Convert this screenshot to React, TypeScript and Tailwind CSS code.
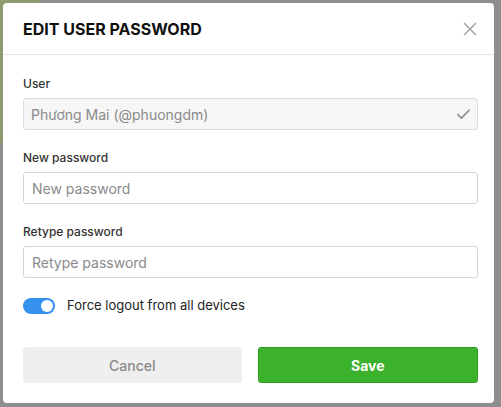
import { Check } from 'lucide-react'

export default function App() {
  return (
    <div
      className="w-[501px] h-[407px] p-[3px] pr-[7px] pb-[4px] bg-[#8e8e8e] bg-no-repeat bg-[length:40px_100%] bg-[linear-gradient(to_bottom,#8d9b6e_143px,#8e8e8e_143px)]"
      style={{ fontFamily: 'Inter, "Noto Sans", sans-serif' }}
    >
      <div className="h-full bg-white rounded-[4px] flex flex-col">
        {/* Header */}
        <div className="h-[52px] shrink-0 flex items-center justify-between pl-5 pr-4 border-b border-[#e3e3e3]">
          <h2 className="text-[16px] font-bold text-[#111]">EDIT USER PASSWORD</h2>
          <button className="w-4 h-4 flex items-center justify-center text-[#a3a3a3]">
            <svg width="14" height="14" viewBox="0 0 14 14" fill="none" stroke="currentColor" strokeWidth="1.5">
              <path d="M1 1L13 13M13 1L1 13" />
            </svg>
          </button>
        </div>

        {/* Body */}
        <div className="pl-5 pr-4 pt-[19px] pb-5 flex flex-col">
          <label className="text-[12px] leading-5 font-medium text-[#333] mb-1">User</label>
          <div className="h-8 flex items-center justify-between pl-[7px] pr-[5px] border border-[#dcdcdc] rounded-[3px] bg-[#f6f6f6]">
            <span className="text-[14px] text-[#8a8a8a]">Phương Mai (@phuongdm)</span>
            <Check size={17} strokeWidth={2.4} className="text-[#8f8f8f]" />
          </div>

          <label className="text-[12px] leading-5 font-medium text-[#333] mt-[18px] mb-1">New password</label>
          <input
            type="password"
            placeholder="New password"
            className="h-8 pl-2 border border-[#d6d6d6] rounded-[3px] text-[14px] text-[#333] placeholder:text-[#8a8a8a] outline-none"
          />

          <label className="text-[12px] leading-5 font-medium text-[#333] mt-[18px] mb-1">Retype password</label>
          <input
            type="password"
            placeholder="Retype password"
            className="h-8 pl-2 border border-[#d6d6d6] rounded-[3px] text-[14px] text-[#333] placeholder:text-[#8a8a8a] outline-none"
          />

          <div className="mt-[18px] h-5 flex items-center gap-3">
            <span className="relative w-8 h-4 rounded-full bg-[#3590ee] shrink-0">
              <span className="absolute right-[2px] top-[2px] w-3 h-3 rounded-full bg-white" />
            </span>
            <span className="text-[13px] text-[#222]">Force logout from all devices</span>
          </div>

          <div className="mt-[31px] flex gap-4">
            <button className="flex-1 h-9 rounded-[3px] bg-[#efefef] text-[14px] text-[#8a8a8a] font-medium">
              Cancel
            </button>
            <button className="flex-1 h-9 rounded-[3px] bg-[#3bb12c] border border-[#2f9d22] text-[14px] text-white font-bold">
              Save
            </button>
          </div>
        </div>
      </div>
    </div>
  )
}
